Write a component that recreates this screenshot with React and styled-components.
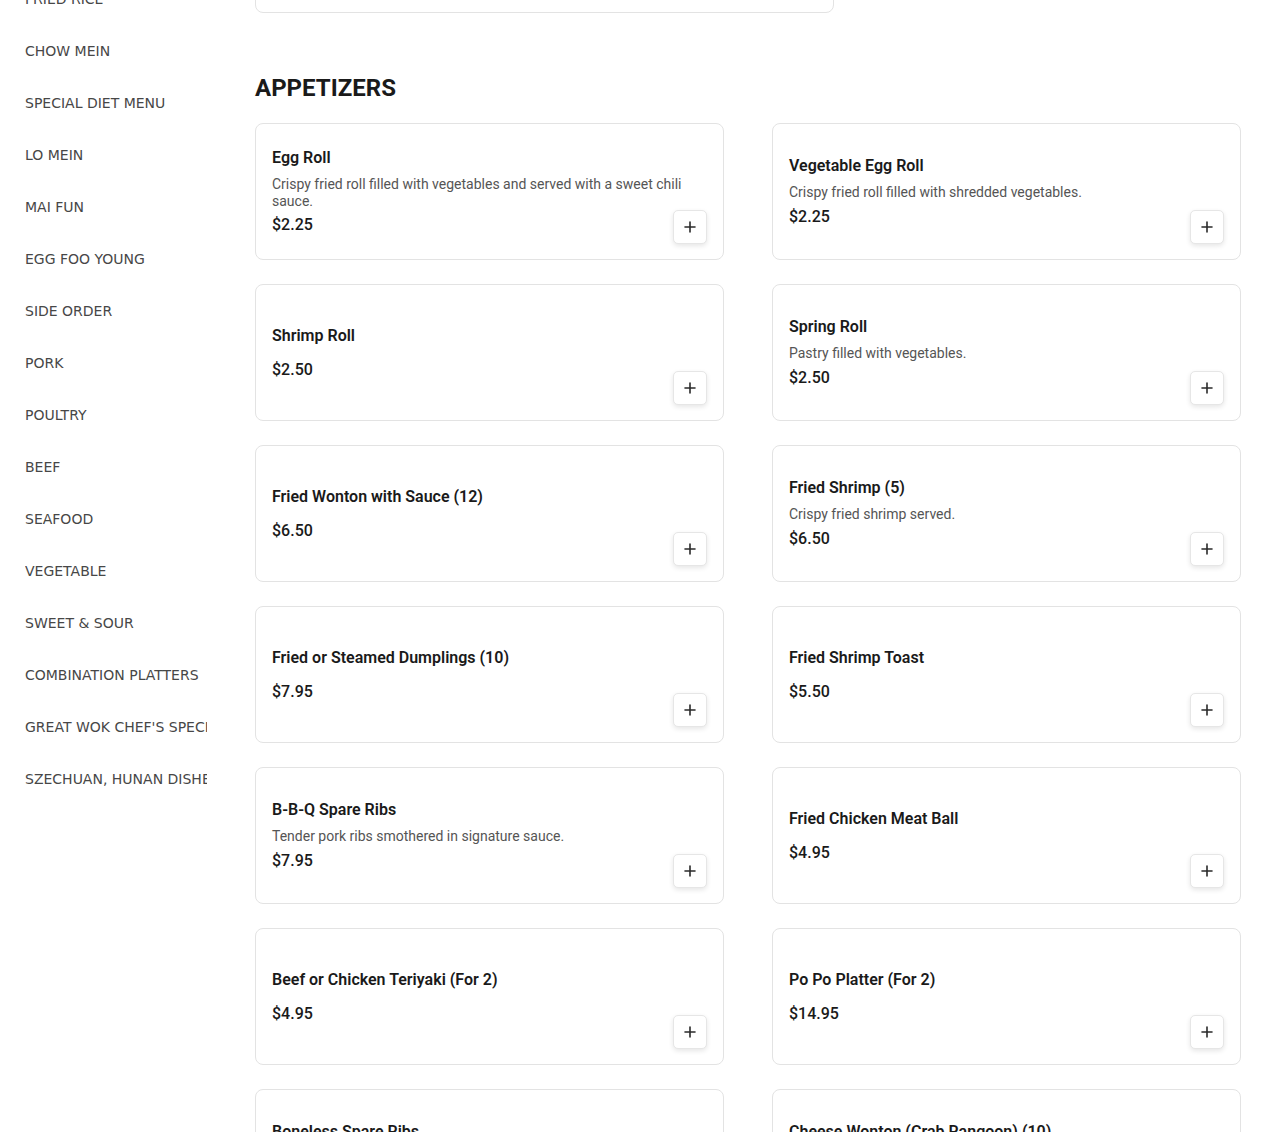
import React from "react";
import styled, { createGlobalStyle } from "styled-components";

const Global = createGlobalStyle`
  html, body { margin: 0; padding: 0; background: #ffffff; }
  body { font-family: Roboto, "Liberation Sans", sans-serif; color: #1a1a1a; overflow: hidden; }
  * { box-sizing: border-box; }
`;

const Page = styled.div`
  display: flex;
  align-items: flex-start;
  margin-top: -131px;
  padding-right: 29px;
`;

const Sidebar = styled.nav`
  flex: 0 0 207px;
  width: 207px;
  padding-left: 25px;
  display: flex;
  flex-direction: column;
`;

const NavItem = styled.div`
  height: 52px;
  display: flex;
  align-items: center;
  white-space: nowrap;
  overflow: hidden;
  font-family: "DejaVu Sans", sans-serif;
  font-size: 14px;
  color: #474747;
  text-transform: uppercase;
`;

const Main = styled.main`
  flex: 1;
  margin-left: 48px;
  min-width: 0;
`;

const PrevCard = styled.div`
  width: 579px;
  height: 144px;
  border: 1px solid #e3e3e3;
  border-radius: 8px;
  background: #fff;
`;

const SectionTitle = styled.h2`
  margin: 60px 0 20px;
  font-family: Roboto, sans-serif;
  font-size: 24px;
  line-height: 30px;
  font-weight: 700;
  color: #1a1a1a;
  text-transform: uppercase;
`;

const Grid = styled.div`
  display: grid;
  grid-template-columns: 1fr 1fr;
  column-gap: 48px;
  row-gap: 24px;
`;

const Card = styled.div`
  position: relative;
  height: 137px;
  border: 1px solid #e3e3e3;
  border-radius: 8px;
  background: #fff;
  padding: 16px;
  display: flex;
  flex-direction: column;
  justify-content: center;
`;

const Title = styled.div`
  font-size: 16px;
  line-height: 24px;
  font-weight: 600;
  color: #1a1a1a;
  margin-bottom: 6px;
`;

const Desc = styled.div`
  font-size: 14px;
  line-height: 16.5px;
  color: #555555;
`;

const Price = styled.div`
  margin-top: 4px;
  font-size: 16px;
  line-height: 24px;
  font-weight: 500;
  color: #1a1a1a;
`;

const AddButton = styled.button`
  position: absolute;
  right: 16px;
  bottom: 15px;
  width: 34px;
  height: 34px;
  padding: 0;
  border: 1px solid #e6e6e6;
  border-radius: 5px;
  background: #fff;
  box-shadow: 0 2px 5px rgba(0, 0, 0, 0.1);
  display: flex;
  align-items: center;
  justify-content: center;
  cursor: pointer;
`;

const PlusIcon = () => (
  <svg width="12" height="12" viewBox="0 0 12 12" fill="none">
    <path d="M6 1v10M1 6h10" stroke="#2a2a2a" strokeWidth="1.6" strokeLinecap="round" />
  </svg>
);

const categories = [
  "Appetizers",
  "Soup",
  "Fried Rice",
  "Chow Mein",
  "Special Diet Menu",
  "Lo Mein",
  "Mai Fun",
  "Egg Foo Young",
  "Side Order",
  "Pork",
  "Poultry",
  "Beef",
  "Seafood",
  "Vegetable",
  "Sweet & Sour",
  "Combination Platters",
  "Great Wok Chef's Specialties",
  "Szechuan, Hunan Dishes",
];

const items = [
  { name: "Egg Roll", desc: "Crispy fried roll filled with vegetables and served with a sweet chili sauce.", price: "$2.25" },
  { name: "Vegetable Egg Roll", desc: "Crispy fried roll filled with shredded vegetables.", price: "$2.25" },
  { name: "Shrimp Roll", price: "$2.50" },
  { name: "Spring Roll", desc: "Pastry filled with vegetables.", price: "$2.50" },
  { name: "Fried Wonton with Sauce (12)", price: "$6.50" },
  { name: "Fried Shrimp (5)", desc: "Crispy fried shrimp served.", price: "$6.50" },
  { name: "Fried or Steamed Dumplings (10)", price: "$7.95" },
  { name: "Fried Shrimp Toast", price: "$5.50" },
  { name: "B-B-Q Spare Ribs", desc: "Tender pork ribs smothered in signature sauce.", price: "$7.95" },
  { name: "Fried Chicken Meat Ball", price: "$4.95" },
  { name: "Beef or Chicken Teriyaki (For 2)", price: "$4.95" },
  { name: "Po Po Platter (For 2)", price: "$14.95" },
  { name: "Boneless Spare Ribs", desc: "Boneless pork strips glazed in barbecue sauce.", price: "$8.95" },
  { name: "Cheese Wonton (Crab Rangoon) (10)", desc: "Crispy wontons filled with crab and cream cheese.", price: "$6.95" },
];

export default function App() {
  return (
    <>
      <Global />
      <Page>
        <Sidebar>
          {categories.map((c) => (
            <NavItem key={c}>{c}</NavItem>
          ))}
        </Sidebar>
        <Main>
          <PrevCard />
          <SectionTitle>Appetizers</SectionTitle>
          <Grid>
            {items.map((it) => (
              <Card key={it.name}>
                <Title>{it.name}</Title>
                {it.desc && <Desc>{it.desc}</Desc>}
                <Price>{it.price}</Price>
                <AddButton aria-label={`Add ${it.name}`}>
                  <PlusIcon />
                </AddButton>
              </Card>
            ))}
          </Grid>
        </Main>
      </Page>
    </>
  );
}
